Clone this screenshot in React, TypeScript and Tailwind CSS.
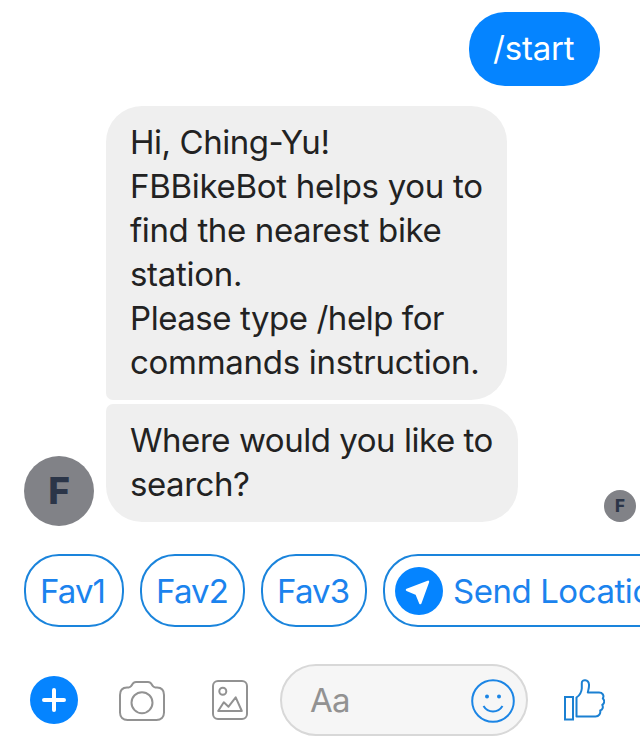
import type { ReactNode } from "react";

function Line({ children, className = "" }: { children: ReactNode; className?: string }) {
  return <div className={`whitespace-nowrap ${className}`}>{children}</div>;
}

function Chip({ label, className }: { label: string; className: string }) {
  return (
    <button
      className={`flex h-[73px] shrink-0 items-center rounded-[35px] border-2 border-[#1a84dc] pl-[14px] text-[#1b83ee] ${className}`}
    >
      {label}
    </button>
  );
}

export default function App() {
  return (
    <div className="flex h-[746px] w-[640px] flex-col overflow-hidden bg-white font-['Inter',sans-serif] text-[33px] leading-[44px] text-[#222222]">
      {/* Conversation */}
      <div className="flex justify-end pt-3 pr-10">
        <div className="h-[74px] w-[131px] rounded-[36px] bg-[#0584ff] pt-[14px] pl-[24px] text-white">
          <Line className="tracking-[-0.2px]">/start</Line>
        </div>
      </div>

      <div className="mt-5 flex h-[416px] items-end">
        <div className="mr-3 -mb-1 ml-6 flex size-[70px] shrink-0 items-center justify-center rounded-full bg-[#818287] text-[37px] font-extrabold text-[#2b3548]">
          F
        </div>
        <div className="flex flex-col gap-1">
          <div className="h-[294px] w-[401px] rounded-[36px] rounded-bl-[7px] bg-[#efefef] pt-[14px] pl-[24px]">
            <Line className="tracking-[-0.45px]">Hi, Ching-Yu!</Line>
            <Line className="tracking-[-0.29px]">FBBikeBot helps you to</Line>
            <Line className="tracking-[-0.36px]">find the nearest bike</Line>
            <Line className="tracking-[-0.3px]">station.</Line>
            <Line className="tracking-[-0.45px]">Please type /help for</Line>
            <Line className="tracking-[-0.29px]">commands instruction.</Line>
          </div>
          <div className="h-[118px] w-[412px] rounded-[36px] rounded-tl-[7px] bg-[#efefef] pt-[14px] pl-[24px]">
            <Line className="tracking-[-0.46px]">Where would you like to</Line>
            <Line className="tracking-[-0.46px]">search?</Line>
          </div>
        </div>
        <div className="mr-1 ml-auto flex size-8 items-center justify-center rounded-full bg-[#818287] text-[17px] font-extrabold text-[#2b3548]">
          F
        </div>
      </div>

      {/* Quick replies */}
      <div className="mt-8 flex h-[73px] gap-4 pl-6">
        <Chip label="Fav1" className="w-[100px] tracking-[-0.9px]" />
        <Chip label="Fav2" className="w-[105px] tracking-[-0.8px]" />
        <Chip label="Fav3" className="w-[106px] tracking-[-0.8px]" />
        <button className="flex w-[340px] shrink-0 items-center rounded-[35px] border-2 border-[#1a84dc] pl-[10px] text-[#1b83ee]">
          <svg className="size-12 shrink-0" viewBox="0 0 48 48">
            <circle cx="24" cy="24" r="24" fill="#0584ff" />
            <path d="M12 22.8L33 14.8L25.3 36L21.5 26.8Z" fill="white" stroke="white" strokeWidth="2.4" strokeLinejoin="round" />
          </svg>
          <span className="ml-[10px] tracking-[-0.45px] whitespace-nowrap">Send Location</span>
        </button>
      </div>

      {/* Composer */}
      <div className="mt-[37px] flex h-[72px] items-center">
        <svg className="ml-[30px] size-12 shrink-0" viewBox="0 0 48 48">
          <circle cx="24" cy="24" r="24" fill="#0584ff" />
          <path d="M24 14V34M14 24H34" stroke="white" strokeWidth="4" strokeLinecap="round" />
        </svg>
        <svg className="mt-0.5 ml-[41px] h-[40px] w-[46px] shrink-0" viewBox="0 0 46 40" fill="none" stroke="#929292" strokeWidth="2">
          <path d="M8 6.5C11.5 6.5 12 5.5 13.3 3.4C14.2 1.6 15 1 17 1H29C31 1 31.8 1.6 32.7 3.4C34 5.5 34.5 6.5 38 6.5C42.5 6.5 45 9.5 45 14V31.5C45 36 42 39 37.5 39H8.5C4 39 1 36 1 31.5V14C1 9.5 3.5 6.5 8 6.5Z" />
          <circle cx="23" cy="21.7" r="10.5" />
        </svg>
        <svg className="ml-[47px] h-[40px] w-[36px] shrink-0" viewBox="0 0 36 40" fill="none" stroke="#929292" strokeWidth="2" strokeLinejoin="round">
          <rect x="1" y="1" width="34" height="38" rx="5" />
          <circle cx="10.8" cy="11.2" r="3.5" />
          <path d="M6.2 31L11.8 22.3L16.5 26.7L23.7 17.3L29.8 31Z" />
        </svg>
        <div className="ml-8 flex h-[72px] w-[248px] items-center rounded-full border-2 border-[#d8d8d8] bg-[#f6f6f6] pl-[28px] text-[#929292]">
          <span className="tracking-[-0.8px]">Aa</span>
          <svg className="mt-0.5 mr-[11px] ml-auto size-11" viewBox="0 0 44 44" fill="none" stroke="#1b85e5" strokeWidth="2">
            <circle cx="22" cy="22" r="20.8" />
            <circle cx="16" cy="17.5" r="2" fill="#1b85e5" stroke="none" />
            <circle cx="28" cy="17.5" r="2" fill="#1b85e5" stroke="none" />
            <path d="M12.5 27C17 34.3 27 34.3 31.5 27" />
          </svg>
        </div>
        <svg className="ml-[36px] h-[42px] w-[41px]" viewBox="0 0 41 42" fill="none" stroke="#1b80d2" strokeWidth="2">
          <rect x="1" y="18" width="8" height="22.5" />
          <path d="M12.5 37.5V18.5C15.5 16.5 17.5 13 17.8 9.5V4C17.8 0 24.5 0 25 5.5C25.3 8.5 24.2 11 23.8 13.5H35C38.5 13.5 40.5 16.5 38.8 19.5C41 21.5 40.5 24.5 38.3 25.8C39.5 28.5 38.5 30.7 36.2 31.4C36.8 34.5 35 37.5 31.5 37.5Z" strokeLinejoin="round" />
        </svg>
      </div>
    </div>
  );
}
